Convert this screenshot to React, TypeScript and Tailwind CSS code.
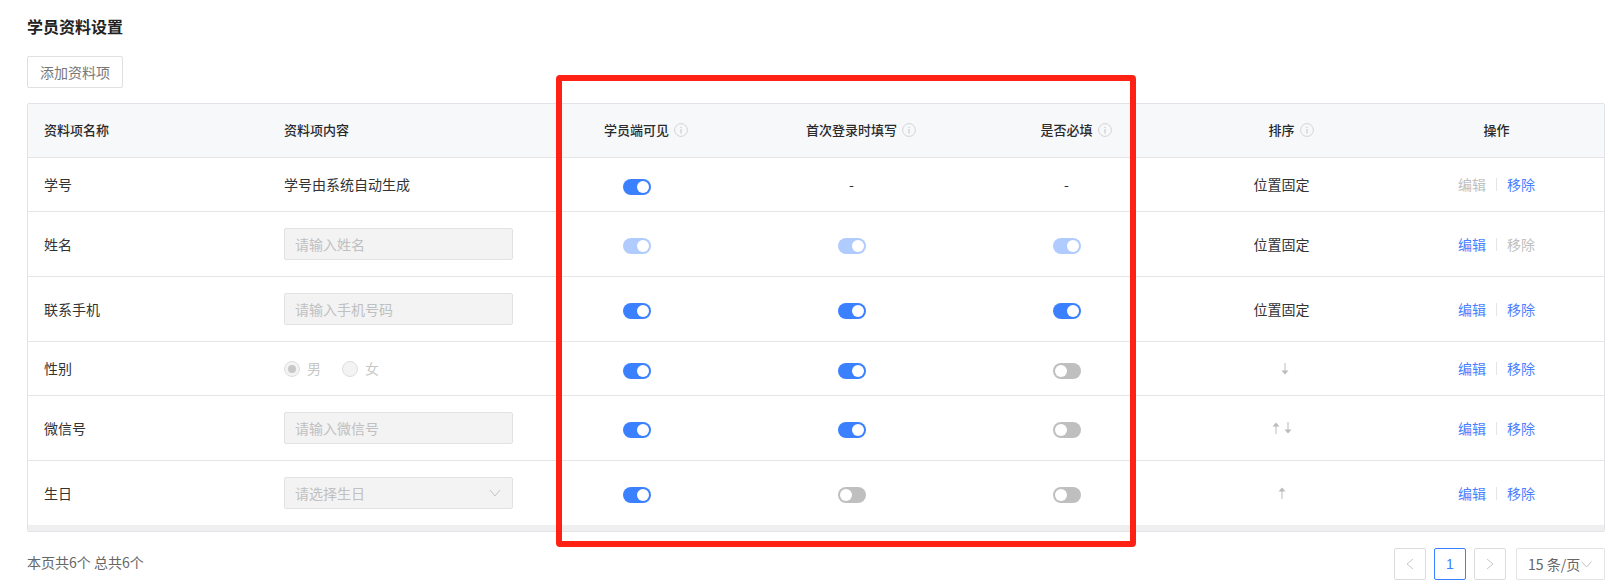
import React from "react";

const font = { fontFamily: '"Noto Sans CJK SC", "Liberation Sans", sans-serif' };

function Info() {
  return (
    <svg width="14" height="14" viewBox="0 0 14 14" fill="none" className="-mr-[19px] shrink-0">
      <circle cx="7" cy="7" r="6.4" stroke="#d4d4d4" strokeWidth="1" />
      <rect x="6.5" y="6" width="1" height="4.5" fill="#c4c4c4" />
      <rect x="6.5" y="3.8" width="1" height="1.2" fill="#c4c4c4" />
    </svg>
  );
}

function Switch({ on, disabled, tall }: { on: boolean; disabled?: boolean; tall?: boolean }) {
  const bg = on ? (disabled ? "bg-[#b0ccff]" : "bg-[#3a80ff]") : "bg-[#bfbfbf]";
  return (
    <span className={`flex h-[16px] w-[28px] rounded-full p-[2px] ${tall ? "mt-[3px]" : "mt-[5px]"} ${bg} ${on ? "justify-end" : "justify-start"}`}>
      <span className="h-[12px] w-[12px] rounded-full bg-white" />
    </span>
  );
}

function Arrow({ up }: { up?: boolean }) {
  return (
    <svg width="8" height="12" viewBox="0 0 8 12" className={up ? "" : "rotate-180"}>
      <path d="M4 0.5 L7.5 4.5 H4.5 V12 H3.5 V4.5 H0.5 Z" fill="#bbbbbb" />
    </svg>
  );
}

function Input({ text, select }: { text: string; select?: boolean }) {
  return (
    <div className="flex h-[32px] w-[229px] items-center justify-between rounded-[2px] border border-[#e2e2e2] bg-[#f3f3f3] pl-[10px] pr-[11px] text-[14px] text-[#c0c0c0]">
      <span>{text}</span>
      {select && (
        <svg width="12" height="8" viewBox="0 0 12 8" fill="none">
          <path d="M1 1 L6 7 L11 1" stroke="#c4c4c4" strokeWidth="1" />
        </svg>
      )}
    </div>
  );
}

function Radio() {
  return (
    <div className="flex items-center text-[14px] text-[#c8c8c8]">
      <span className="flex h-[16px] w-[16px] items-center justify-center rounded-full border border-[#dedede] bg-[#f3f3f3]">
        <span className="h-[8px] w-[8px] rounded-full bg-[#c8c8c8]" />
      </span>
      <span className="ml-[7px]">男</span>
      <span className="ml-[21px] h-[16px] w-[16px] rounded-full border border-[#dedede] bg-[#f3f3f3]" />
      <span className="ml-[7px]">女</span>
    </div>
  );
}

function Actions({ edit = true, remove = true }: { edit?: boolean; remove?: boolean }) {
  return (
    <div className="flex items-center text-[14px]">
      <span className={edit ? "text-[#4a7fff]" : "text-[#c0c0c0]"}>编辑</span>
      <span className="mx-[10px] h-[13px] w-px bg-[#e5e5e5]" />
      <span className={remove ? "text-[#4a7fff]" : "text-[#c0c0c0]"}>移除</span>
    </div>
  );
}

type Row = {
  h: string;
  name: string;
  content: React.ReactNode;
  a: React.ReactNode;
  b: React.ReactNode;
  c: React.ReactNode;
  sort: React.ReactNode;
  actions: React.ReactNode;
};

const fixed = <span>位置固定</span>;

const rows: Row[] = [
  { h: "h-[54px]", name: "学号", content: <span>学号由系统自动生成</span>, a: <Switch on />, b: <span>-</span>, c: <span>-</span>, sort: fixed, actions: <Actions edit={false} /> },
  { h: "h-[65px]", name: "姓名", content: <Input text="请输入姓名" />, a: <Switch tall on disabled />, b: <Switch tall on disabled />, c: <Switch tall on disabled />, sort: fixed, actions: <Actions remove={false} /> },
  { h: "h-[65px]", name: "联系手机", content: <Input text="请输入手机号码" />, a: <Switch tall on />, b: <Switch tall on />, c: <Switch tall on />, sort: fixed, actions: <Actions /> },
  { h: "h-[54px]", name: "性别", content: <Radio />, a: <Switch on />, b: <Switch on />, c: <Switch on={false} />, sort: <span className="ml-[6px] flex"><Arrow /></span>, actions: <Actions /> },
  { h: "h-[65px]", name: "微信号", content: <Input text="请输入微信号" />, a: <Switch tall on />, b: <Switch tall on />, c: <Switch tall on={false} />, sort: <span className="flex gap-[4px]"><Arrow up /><Arrow /></span>, actions: <Actions /> },
  { h: "h-[64px]", name: "生日", content: <Input text="请选择生日" select />, a: <Switch tall on />, b: <Switch tall on={false} />, c: <Switch tall on={false} />, sort: <span className="flex"><Arrow up /></span>, actions: <Actions /> },
];

const grid = "grid grid-cols-[240px_261px_215px_215px_215px_215px_215px]";
const center = "flex items-center justify-center";

function Head({ text }: { text: string }) {
  return (
    <div className={`${center} gap-[5px]`}>
      <span>{text}</span>
      <Info />
    </div>
  );
}

function Pager({ children, active }: { children: React.ReactNode; active?: boolean }) {
  return (
    <div className={`flex h-[32px] w-[32px] items-center justify-center rounded-[2px] border font-['Liberation_Sans'] text-[14px] ${active ? "border-[#3a80ff] text-[#3a80ff]" : "border-[#dcdcdc] text-[#c4c4c4]"}`}>
      {children}
    </div>
  );
}

export default function App() {
  return (
    <div style={font} className="relative h-[587px] w-[1623px] overflow-hidden bg-white px-[27px] text-[14px] text-[#333333]">
      <h1 className="pt-[15px] text-[16px] font-bold leading-[22px] text-[#222222]">学员资料设置</h1>
      <button className="mt-[19px] block h-[32px] w-[96px] rounded-[2px] border border-[#e0e0e0] bg-white text-[14px] text-[#777777]">添加资料项</button>

      <div className="mt-[15px] w-[1578px] rounded-[2px] border border-[#e2e3e8]">
        <div className={`${grid} h-[54px] border-b border-[#e6e6e6] bg-[#f7f8fa] pb-[2px] text-[13px] font-medium text-[#2a2a2a]`}>
          <div className="flex items-center pl-[16px]">资料项名称</div>
          <div className="flex items-center pl-[16px]">资料项内容</div>
          <Head text="学员端可见" />
          <Head text="首次登录时填写" />
          <Head text="是否必填" />
          <Head text="排序" />
          <div className={center}>操作</div>
        </div>
        {rows.map((r, i) => (
          <div key={r.name} className={`${grid} ${r.h} ${i < rows.length - 1 ? "border-b border-[#e6e6e6]" : ""}`}>
            <div className="flex items-center pl-[16px]">{r.name}</div>
            <div className="flex items-center pl-[16px]">{r.content}</div>
            <div className={center}>{r.a}</div>
            <div className={center}>{r.b}</div>
            <div className={center}>{r.c}</div>
            <div className={center}>{r.sort}</div>
            <div className={center}>{r.actions}</div>
          </div>
        ))}
        <div className="h-[6px] bg-[#efefef]" />
      </div>

      <div className="mt-[16px] flex w-[1578px] items-center justify-between">
        <span className="-mt-[3px] text-[#666666]">本页共6个 总共6个</span>
        <div className="flex items-center">
          <Pager>
            <svg width="8" height="12" viewBox="0 0 8 12" fill="none"><path d="M7 1 L1 6 L7 11" stroke="#c8c8c8" /></svg>
          </Pager>
          <div className="ml-[8px]"><Pager active>1</Pager></div>
          <div className="ml-[8px]">
            <Pager>
              <svg width="8" height="12" viewBox="0 0 8 12" fill="none"><path d="M1 1 L7 6 L1 11" stroke="#c8c8c8" /></svg>
            </Pager>
          </div>
          <div className="ml-[10px] flex h-[32px] w-[89px] items-center rounded-[2px] border border-[#e4e4e4] pl-[11px] text-[14px] text-[#666666]">
            <span className="whitespace-nowrap">15 条/页</span>
            <svg className="ml-[1px] shrink-0" width="11" height="7" viewBox="0 0 11 7" fill="none"><path d="M0.5 0.5 L5.5 6 L10.5 0.5" stroke="#c4c4c4" /></svg>
          </div>
        </div>
      </div>

      <div className="pointer-events-none absolute left-[556px] top-[75px] h-[472px] w-[580px] rounded-[4px] border-[6px] border-[#ff2114]" />
    </div>
  );
}
